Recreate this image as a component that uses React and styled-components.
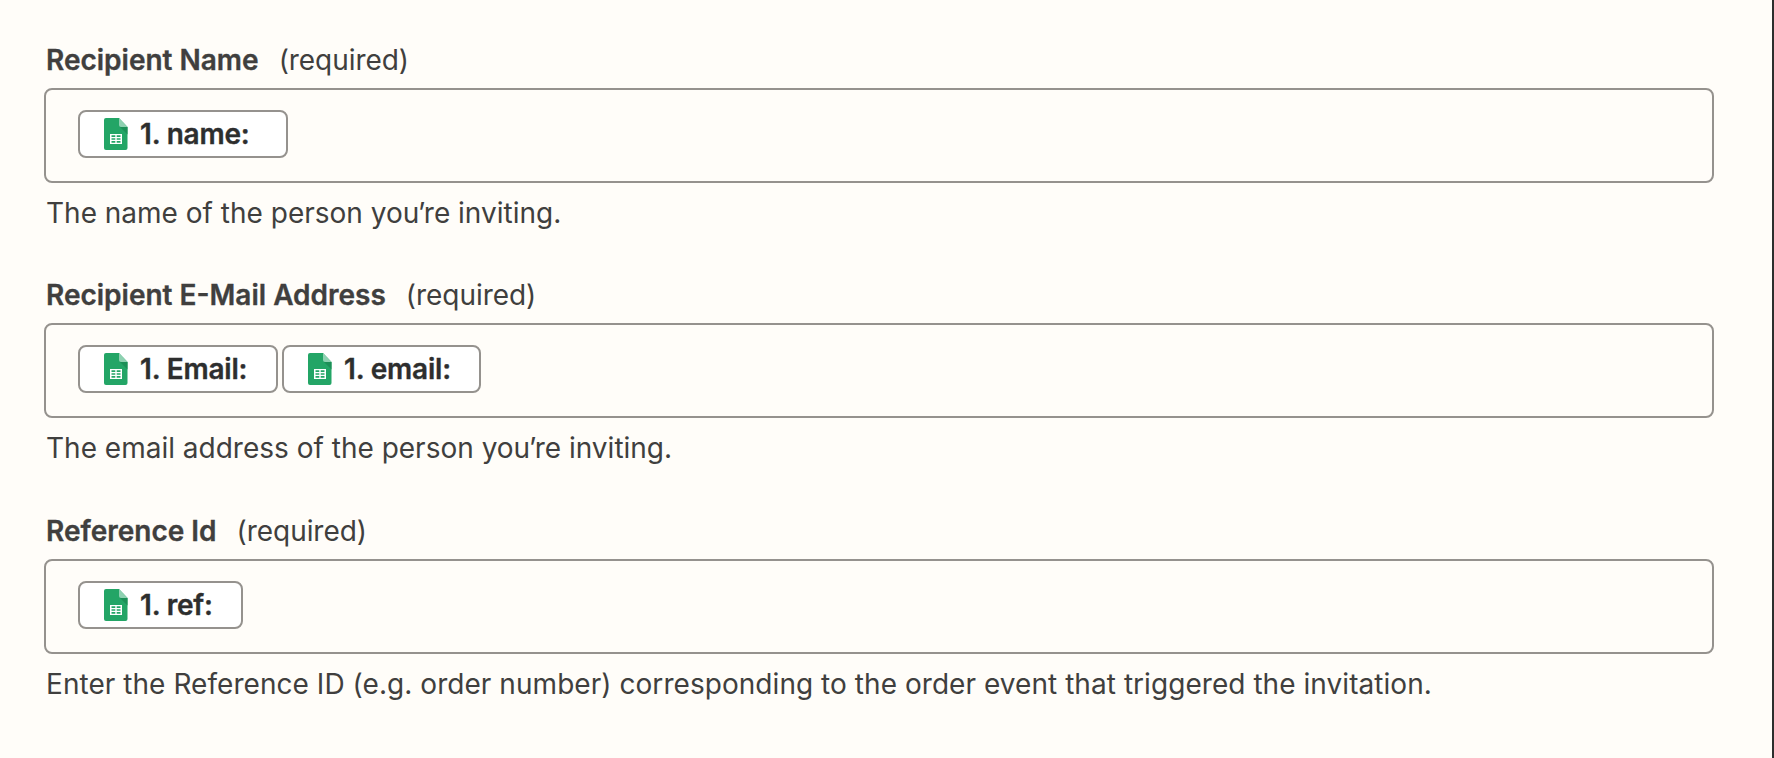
import React from 'react';
import styled, { createGlobalStyle } from 'styled-components';

const GlobalStyle = createGlobalStyle`
  * {
    box-sizing: border-box;
  }

  body {
    margin: 0;
    background: #fffdf9;
    font-family: Inter, 'Liberation Sans', sans-serif;
  }
`;

const Panel = styled.main`
  display: flex;
  flex-direction: column;
  height: 758px;
  padding: 43px 58px 0 44px;
  overflow: hidden;
  background: #fffdf9;
  border-right: 2px solid #2d2e2e;
`;

const Field = styled.section`
  height: ${props => props.$height}px;
`;

const FieldHeader = styled.div`
  display: flex;
  align-items: baseline;
  height: 45px;
  padding-left: 2px;
  color: #403f3e;
  font-size: 28px;
  line-height: 34px;
  white-space: nowrap;
`;

const Label = styled.label`
  font-weight: 600;
  -webkit-text-stroke: 0.35px currentColor;
`;

const Required = styled.span`
  margin-left: 20px;
  font-weight: 400;
  letter-spacing: -0.05px;
`;

const InputBox = styled.div`
  display: flex;
  align-items: flex-start;
  gap: 4px;
  height: 95px;
  padding: 20px 32px;
  border: 2px solid #95928e;
  border-radius: 8px;
`;

const Pill = styled.span`
  display: flex;
  align-items: center;
  width: ${props => props.$width}px;
  height: 48px;
  padding-left: 24px;
  background: #ffffff;
  border: 2px solid #95928e;
  border-radius: 8px;
  color: #2d2e2e;
  font-size: 28px;
  font-weight: 600;
  letter-spacing: -0.2px;
  line-height: 44px;
  white-space: nowrap;
  -webkit-text-stroke: 0.35px currentColor;
`;

const PillIcon = styled.svg`
  flex: none;
  width: 24px;
  height: 32px;
  margin-right: 12px;
`;

const HelpText = styled.p`
  margin: 12px 0 0 2px;
  color: #403f3e;
  font-size: 28px;
  letter-spacing: ${props => props.$tracking || 0}px;
  line-height: 36px;
  white-space: nowrap;
`;

// pulls the apostrophe in towards its neighbours
const Tight = styled.span`
  letter-spacing: -1.6px;
`;

const fields = [
  {
    label: 'Recipient Name',
    height: 235,
    pills: [{ text: '1. name:', width: 210 }],
    help: <>The name of the person yo<Tight>u’</Tight>re inviting.</>,
  },
  {
    label: 'Recipient E-Mail Address',
    height: 236,
    pills: [
      { text: '1. Email:', width: 200 },
      { text: '1. email:', width: 199 },
    ],
    help: <>The email address of the person yo<Tight>u’</Tight>re inviting.</>,
  },
  {
    label: 'Reference Id',
    height: 235,
    pills: [{ text: '1. ref:', width: 165 }],
    help: 'Enter the Reference ID (e.g. order number) corresponding to the order event that triggered the invitation.',
    tracking: 0.05,
  },
];

const SheetsIcon = () => (
  <PillIcon viewBox="0 0 24 32" aria-hidden="true">
    <path d="M2 0H15L23.5 9V30a2 2 0 0 1-2 2H2a2 2 0 0 1-2-2V2a2 2 0 0 1 2-2Z" fill="#23a566" />
    <path d="M15.5 8.5L23.5 16.500V9Z" fill="#1c8f57" />
    <path d="M15 0L23.500 9H17a2 2 0 0 1-2-2Z" fill="#8ed1b1" />
    <path
      d="M6 16H18V26H6ZM7.500 17.300V18.900H11.300V17.300ZM12.700 17.300V18.900H16.500V17.300ZM7.500 20.200V21.800H11.300V20.200ZM12.700 20.200V21.800H16.500V20.200ZM7.500 23.100V24.700H11.300V23.100ZM12.700 23.100V24.700H16.500V23.100Z"
      fill="#ffffff"
      fillRule="evenodd"
    />
  </PillIcon>
);

const App = () => {
  return (
    <>
      <GlobalStyle />
      <Panel>
        {fields.map(field => (
          <Field key={field.label} $height={field.height}>
            <FieldHeader>
              <Label>{field.label}</Label>
              <Required>(required)</Required>
            </FieldHeader>
            <InputBox>
              {field.pills.map(pill => (
                <Pill key={pill.text} $width={pill.width}>
                  <SheetsIcon />
                  {pill.text}
                </Pill>
              ))}
            </InputBox>
            <HelpText $tracking={field.tracking}>{field.help}</HelpText>
          </Field>
        ))}
      </Panel>
    </>
  );
};

export default App;
